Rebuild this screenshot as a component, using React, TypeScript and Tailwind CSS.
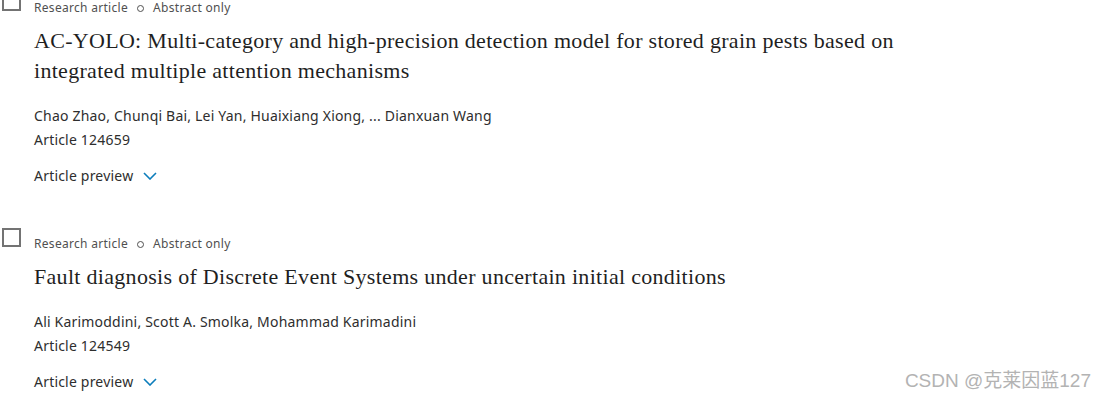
import React from "react";

type Item = {
  title: string;
  authors: string;
  article: string;
};

const items: Item[] = [
  {
    title:
      "AC-YOLO: Multi-category and high-precision detection model for stored grain pests based on integrated multiple attention mechanisms",
    authors: "Chao Zhao, Chunqi Bai, Lei Yan, Huaixiang Xiong, ... Dianxuan Wang",
    article: "Article 124659",
  },
  {
    title: "Fault diagnosis of Discrete Event Systems under uncertain initial conditions",
    authors: "Ali Karimoddini, Scott A. Smolka, Mohammad Karimadini",
    article: "Article 124549",
  },
];

const sans = "font-['Noto_Sans',sans-serif]";

const ResultItem = ({ item }: { item: Item }) => (
  <li className="flex">
    <div className="w-[34px] shrink-0 pl-[2px]">
      <span className="block w-[19px] h-[19px] border-2 border-[#737373] bg-white" />
    </div>
    <div className="flex flex-col">
      <div className={`flex items-center pt-[9px] h-[23px] text-[12px] tracking-[0.3px] leading-[14px] text-[#505050] ${sans}`}>
        <span>Research article</span>
        <span className="mx-[9px] w-[7px] h-[7px] rounded-full border-[1.5px] border-[#505050]" />
        <span>Abstract only</span>
      </div>
      <h2 className="mt-[11px] max-w-[870px] font-['Liberation_Serif',serif] text-[22px] tracking-[0.3px] leading-[30px] text-[#1f1f1f]">
        {item.title}
      </h2>
      <div className={`mt-[18px] text-[14px] tracking-[0.2px] leading-[24px] text-[#2e2e2e] ${sans}`}>
        <div>{item.authors}</div>
        <div>{item.article}</div>
      </div>
      <button className={`mt-[12px] flex items-center gap-[10px] text-[14px] tracking-[0.2px] leading-[24px] text-[#2e2e2e] ${sans}`}>
        Article preview
        <svg width="14" height="8" viewBox="0 0 14 8" fill="none">
          <path d="M1 1 L7 7 L13 1" stroke="#0c7dbb" strokeWidth="1.6" />
        </svg>
      </button>
    </div>
  </li>
);

export default function App() {
  return (
    <div className="relative w-[1106px] h-[402px] overflow-hidden bg-white">
      <ul className="-mt-[8px] flex flex-col gap-[40px]">
        {items.map((item) => (
          <ResultItem key={item.article} item={item} />
        ))}
      </ul>
      <div className="absolute right-[15px] bottom-[7px] font-['Liberation_Sans','Noto_Sans_CJK_SC',sans-serif] text-[19px] text-[#b3b3b3]">
        CSDN @克莱因蓝127
      </div>
    </div>
  );
}
